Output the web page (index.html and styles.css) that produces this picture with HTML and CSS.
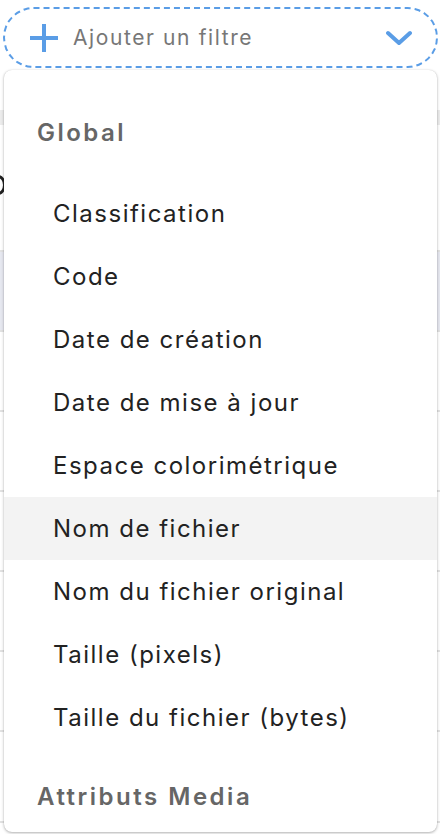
FILE: index.html
```html
<!DOCTYPE html>
<html lang="fr">
<head>
    <meta charset="UTF-8">
    <meta name="viewport" content="width=device-width, initial-scale=1.0">
    <title>Ajouter un filtre</title>
    <link rel="stylesheet" href="styles.css">
</head>
<body>

    <div class="page">
        <div class="filter">
            <button class="filter-toggle" type="button">
                <svg class="icon-plus" width="28" height="28" viewBox="0 0 28 28">
                    <path d="M14 0 V28 M0 14 H28" stroke="#5a9de6" stroke-width="4" fill="none"/>
                </svg>
                <span class="filter-label">Ajouter un filtre</span>
                <svg class="icon-chevron" width="26" height="16" viewBox="0 0 26 16">
                    <path d="M2 3 L13 13 L24 3" stroke="#5a9de6" stroke-width="4" fill="none" stroke-linecap="round" stroke-linejoin="round"/>
                </svg>
            </button>
        </div>

        <!-- content behind the dropdown -->
        <div class="list-behind">
            <div class="row row-top"></div>
            <div class="row row-head"></div>
            <div class="row row-tall"><span class="cut-mark"></span></div>
            <div class="row row-selected"></div>
            <div class="row"></div>
            <div class="row"></div>
            <div class="row"></div>
            <div class="row"></div>
            <div class="row"></div>
            <div class="row"><span class="thumb"></span></div>
        </div>

        <div class="filter-menu">
            <div class="menu-group">
                <div class="group-label">Global</div>
                <div class="menu-item">Classification</div>
                <div class="menu-item">Code</div>
                <div class="menu-item">Date de création</div>
                <div class="menu-item">Date de mise à jour</div>
                <div class="menu-item">Espace colorimétrique</div>
                <div class="menu-item hover">Nom de fichier</div>
                <div class="menu-item">Nom du fichier original</div>
                <div class="menu-item">Taille (pixels)</div>
                <div class="menu-item">Taille du fichier (bytes)</div>
            </div>
            <div class="menu-group">
                <div class="group-label">Attributs Media</div>
            </div>
        </div>
    </div>

</body>
</html>
```

FILE: styles.css
```css
body {
    font-family: Inter, "Open Sans", sans-serif;
    background-color: #fff;
    margin: 0;
    padding: 0;
    overflow: hidden;
}
.page {
    position: relative;
    height: 834px;
    overflow: hidden;
}
.filter {
    padding: 7px 2px 0 3px;
}
.filter-toggle {
    display: flex;
    align-items: center;
    width: 100%;
    height: 61px;
    padding: 0 24px 0 25px;
    background-color: #fff;
    border: 2px dashed #5a9de6;
    border-radius: 31px;
    font-family: inherit;
    cursor: pointer;
}
.icon-plus {
    flex: none;
}
.filter-label {
    flex: 1;
    margin-left: 15px;
    text-align: left;
    font-size: 21px;
    letter-spacing: 1.6px;
    color: #777;
}
.icon-chevron {
    flex: none;
}
.list-behind {
    margin-top: 7px;
}
.row {
    height: 78px;
    border-bottom: 2px solid #e2e2e2;
}
.row-top {
    height: 35px;
    border-bottom: none;
}
.row-head {
    height: 15px;
    background-color: #ececec;
    border-bottom: none;
}
.row-tall {
    height: 125px;
    position: relative;
}
.row-selected {
    background-color: #e6e8f0;
}
.cut-mark {
    position: absolute;
    left: -10px;
    top: 50px;
    width: 10px;
    height: 14px;
    border: 3px solid #222;
    border-radius: 50%;
}
.thumb {
    display: block;
    margin: 11px 0 0 115px;
    width: 18px;
    height: 20px;
    background-color: #5a4638;
}
.filter-menu {
    position: absolute;
    top: 70px;
    left: 4px;
    right: 3px;
    height: 762px;
    padding-top: 15px;
    box-sizing: border-box;
    background-color: #fff;
    border-radius: 8px;
    box-shadow: 0 1px 3px rgba(0, 0, 0, 0.3), 0 0 1px rgba(0, 0, 0, 0.15);
    overflow: hidden;
}
.group-label {
    padding: 33px 0 34px 33px;
    line-height: 30px;
    font-size: 24px;
    font-weight: 600;
    letter-spacing: 2.5px;
    color: #666;
}
.menu-item {
    display: flex;
    align-items: center;
    height: 63px;
    padding-left: 49px;
    font-size: 24px;
    letter-spacing: 1.5px;
    color: #222;
}
.menu-item.hover {
    background-color: #f3f3f3;
}
```
